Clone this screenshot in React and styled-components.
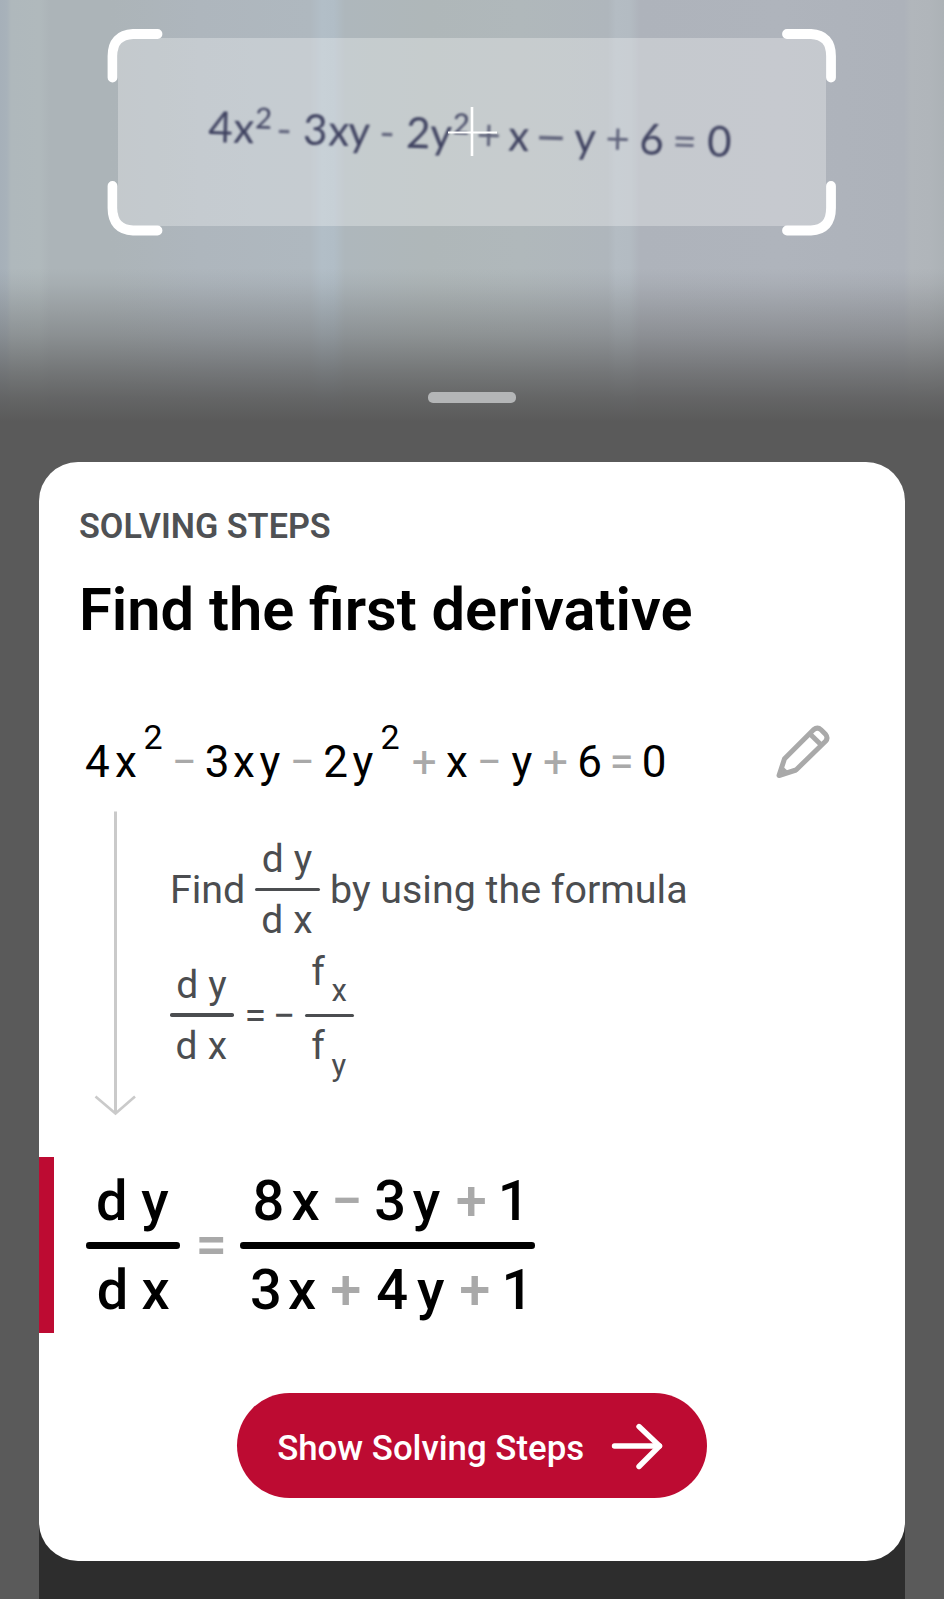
import React from "react";
import styled, { createGlobalStyle } from "styled-components";

const GlobalStyle = createGlobalStyle`
  *, *::before, *::after { box-sizing: border-box; }
  body { margin: 0; background: #5a5a5a; font-family: Roboto, sans-serif; }
`;

const Screen = styled.main`
  display: flex;
  flex-direction: column;
  width: 944px;
  height: 1599px;
  overflow: hidden;
  background: #5a5a5a;
`;

/* ---------- camera preview ---------- */

const Camera = styled.section`
  display: flex;
  flex-direction: column;
  align-items: center;
  flex: none;
  height: 461.5px;
  padding-top: 38px;
  background:
    linear-gradient(
      180deg,
      rgba(90, 90, 90, 0) 268px,
      rgba(90, 90, 90, 0.07) 284px,
      rgba(90, 90, 90, 0.4) 335px,
      rgba(90, 90, 90, 0.7) 373px,
      rgba(90, 90, 90, 0.88) 398px,
      #5a5a5a 422px
    ),
    linear-gradient(
      90deg,
      #a6b0b9 0, #a8b2ba 7px, #afb8bc 11px, #b0b9bc 40px, #acb4b8 50px,
      #acb4b8 110px, #aeb6bd 200px, #afb8bf 310px, #b2bec7 322px,
      #b1bdc6 334px, #aeb7bc 345px, #afb7b9 430px, #b0b8bb 520px,
      #afb6bc 608px, #b4bcc3 616px, #b3bbc2 630px, #aeb3bb 640px,
      #afb4bc 780px, #adb2ba 904px, #b1b6bb 911px, #b0b5ba 930px, #acb2b6 944px
    );
`;

const Viewfinder = styled.div`
  position: relative;
  flex: none;
  width: 708px;
  height: 187.5px;
  padding: 62.7px 0 0 89.6px;
  background: rgba(255, 255, 255, 0.29);
`;

const FrameOverlay = styled.svg`
  position: absolute;
  left: -13px;
  top: -11px;
`;

const PrintedEquation = styled.div`
  font: 42px/50px Lato, "Open Sans", sans-serif;
  color: #3f4260;
  white-space: nowrap;
  transform: rotate(1.65deg);
  transform-origin: 0 41px;
  filter: blur(1.1px);
`;

const Handle = styled.div`
  flex: none;
  width: 88px;
  height: 10.5px;
  margin: 166.5px 1px 0 0;
  border-radius: 5px;
  background: #b4b6b7;
`;

/* ---------- math primitives ---------- */

const Glyph = styled.span`
  display: inline-block;
  width: ${(p) => p.$w}px;
  color: ${(p) => p.$color || "inherit"};
  opacity: ${(p) => p.$fade || 1};
  ${(p) =>
    p.$shift
      ? `font-size: ${p.$size}px; line-height: 0; vertical-align: ${p.$shift}px;`
      : ""}
`;

const Fraction = styled.span`
  display: flex;
  flex-direction: column;
  flex: none;
  width: ${(p) => p.$w}px;
`;

const Part = styled.span`
  white-space: nowrap;
  padding: ${(p) => p.$pad};
`;

const Bar = styled.span`
  height: ${(p) => p.$h}px;
  border-radius: ${(p) => p.$h / 2}px;
  background: currentColor;
`;

/* ---------- card ---------- */

const Sheet = styled.section`
  flex: none;
  width: 866px;
  height: 1137.5px;
  margin-left: 39px;
  background: linear-gradient(180deg, transparent 50%, #2d2d2d 50%);
`;

const Card = styled.article`
  display: flex;
  flex-direction: column;
  height: 1099px;
  padding-top: 44.2px;
  border-radius: 39px;
  background: #fff;
`;

const Eyebrow = styled.p`
  margin: 0 0 29.3px 40px;
  font-size: 34.2px;
  font-weight: 600;
  line-height: 40px;
  color: #4f5154;
`;

const Title = styled.h1`
  margin: 0 0 91.3px 40px;
  font-size: 59.6px;
  font-weight: 600;
  line-height: 70px;
  color: #000;
`;

const EquationRow = styled.div`
  display: flex;
  justify-content: space-between;
  align-items: flex-start;
  height: 52px;
  padding: 0 75.2px 0 46.1px;
`;

const Equation = styled.div`
  font-size: 44px;
  line-height: 52px;
  color: #000;
  white-space: nowrap;
`;

const EditButton = styled.button`
  display: block;
  margin: -11.8px 0 0;
  padding: 0;
  border: 0;
  background: none;
  line-height: 0;
`;

const Step = styled.div`
  display: flex;
  gap: 31.9px;
  margin: 21.7px 0 39px 53px;
  height: 308px;
`;

const Explanation = styled.div`
  padding-top: 26.2px;
  font-size: 39px;
  line-height: 46px;
  color: #4b4d50;
`;

const Line = styled.div`
  display: flex;
  align-items: center;
  margin-bottom: 6.3px;
  white-space: nowrap;
`;

const Word = styled.span`
  font-size: 39.4px;
  width: ${(p) => (p.$w ? p.$w + "px" : "auto")};
  margin-left: ${(p) => p.$ml || 0}px;
  padding-top: 1px;
`;

const Result = styled.div`
  display: flex;
  align-items: center;
  height: 176px;
  padding: 1px 0 0 32px;
  border-left: 15px solid #bd0b32;
  font-size: 56px;
  font-weight: 500;
  line-height: 66px;
  color: #000;
`;

const ResultSign = styled.span`
  width: 44.4px;
  margin-left: 15.4px;
  color: #a9a9a9;
`;

const StepsButton = styled.button`
  display: flex;
  align-items: center;
  gap: 25px;
  width: 470px;
  height: 105px;
  margin: 60px 0 0 198px;
  padding: 0 0 0 40.2px;
  border: 0;
  border-radius: 53px;
  background: #bd0b32;
  color: #fff;
  font: 500 34.8px/42px Roboto, sans-serif;
  white-space: nowrap;
`;

const ButtonLabel = styled.span`
  padding-top: 5px;
`;

const OPERATORS = "+−=";

const printed = [
  ["4", 25], ["x", 21.4], ["2", 21.5, 29, 15], ["-", 26.8], ["3", 25.3], ["x", 20],
  ["y", 30.9], ["-", 26.8], ["2", 24.3], ["y", 22.2], ["2", 24.2, 29, 15], ["+", 31.6],
  ["x", 26.9], ["−", 39.1, 55, -4], ["y", 31.4], ["+", 34], ["6", 33], ["=", 34.7], ["0", 30],
];

const typed = [
  ["4", 30], ["x", 28.5], ["2", 27.9, 34, 28], ["−", 33.2], ["3", 28.4], ["x", 26.5],
  ["y", 29.9], ["−", 33.7], ["2", 29.4], ["y", 28], ["2", 31.1, 34, 28], ["+", 34.4],
  ["x", 30.4], ["−", 35.1], ["y", 31.4], ["+", 34.4], ["6", 32.1], ["=", 32.3], ["0", 30],
];

const numerator = [["8", 39.2], ["x", 39.7], ["−", 43], ["3", 38.4], ["y", 43], ["+", 42], ["1", 32]];
const denominator = [["3", 37.8], ["x", 42.4], ["+", 46.1], ["4", 40.6], ["y", 42.3], ["+", 42.2], ["1", 32]];

function Glyphs({ items, operatorColor, operatorFade }) {
  return items.map(([char, width, size, shift], i) => {
    const isOperator = OPERATORS.includes(char) || char === "-";
    return (
      <Glyph
        key={i}
        $w={width}
        $size={size}
        $shift={shift}
        $color={isOperator ? operatorColor : undefined}
        $fade={isOperator ? operatorFade : undefined}
      >
        {char}
      </Glyph>
    );
  });
}

function Derivative() {
  return (
    <Fraction $w={64.5}>
      <Part $pad="0 0 5.6px 6.3px">
        <Glyphs items={[["d", 32], ["y", 20]]} />
      </Part>
      <Bar $h={3.5} />
      <Part $pad="5.9px 0 0 5.7px">
        <Glyphs items={[["d", 32.2], ["x", 20]]} />
      </Part>
    </Fraction>
  );
}

function ViewfinderFrame() {
  return (
    <FrameOverlay width="734" height="210" viewBox="0 0 734 210" fill="none" stroke="#fff">
      <g strokeWidth="9.8" strokeLinecap="round">
        <path d="M52.5 7H28Q7.5 8 7.5 29V50.5" />
        <path d="M682 7H706Q726 8 726 29V50.5" />
        <path d="M7.5 159V181Q7.5 202.5 28 203.5H52.5" />
        <path d="M726 159V181Q726 202.5 706 203.5H682" />
      </g>
      <path d="M343 105.5H392" strokeWidth="2.2" />
      <path d="M367 80V129" strokeWidth="2.6" />
    </FrameOverlay>
  );
}

function PencilIcon() {
  return (
    <svg width="56" height="56" viewBox="0 0 56 56" fill="none" stroke="#a9a9a9" strokeWidth="5" strokeLinejoin="round">
      <path d="M5 51.5L10.5 34.8L39.5 5.8Q43.5 2.5 47 5.8L51.5 10.3Q54.5 14 51.5 17.2L22 46Z" />
      <path d="M35.5 9.5L47.3 21" />
      <path d="M5 51.5L8 43L14 48.6Z" fill="#a9a9a9" strokeWidth="2" />
    </svg>
  );
}

function DownArrow() {
  return (
    <svg width="46" height="308" viewBox="0 0 46 308" fill="none" stroke="#cacaca">
      <path d="M23.5 1.5V303" strokeWidth="3" />
      <path d="M3.5 286.5L23.5 303.5L43 286.5" strokeWidth="2.6" />
    </svg>
  );
}

function RightArrow() {
  return (
    <svg width="54" height="50" viewBox="0 0 54 50" fill="none" stroke="#fff" strokeWidth="5.4" strokeLinecap="round" strokeLinejoin="round">
      <path d="M5.5 26H50.5" />
      <path d="M30 6.5L50.5 26L30 46.5" />
    </svg>
  );
}

export default function App() {
  return (
    <Screen>
      <GlobalStyle />
      <Camera>
        <Viewfinder>
          <PrintedEquation>
            <Glyphs items={printed} operatorFade={0.75} />
          </PrintedEquation>
          <ViewfinderFrame />
        </Viewfinder>
        <Handle />
      </Camera>

      <Sheet>
        <Card>
          <Eyebrow>SOLVING STEPS</Eyebrow>
          <Title>Find the first derivative</Title>

          <EquationRow>
            <Equation>
              <Glyphs items={typed} operatorColor="#a9a9a9" />
            </Equation>
            <EditButton aria-label="Edit">
              <PencilIcon />
            </EditButton>
          </EquationRow>

          <Step>
            <DownArrow />
            <Explanation>
              <Line>
                <Word $w={85.6}>Find</Word>
                <Derivative />
                <Word $ml={10}>by using the formula</Word>
              </Line>
              <Line>
                <Derivative />
                <Word $ml={10} $w={28.7}>=</Word>
                <Word $w={31.6}>−</Word>
                <Fraction $w={49.5}>
                  <Part $pad="0 0 18.2px 6.7px">
                    <Glyphs items={[["f", 20.2], ["x", 18, 31, -15.5]]} />
                  </Part>
                  <Bar $h={3.5} />
                  <Part $pad="5.9px 0 12.3px 6.7px">
                    <Glyphs items={[["f", 20.2], ["y", 18, 31, -16.5]]} />
                  </Part>
                </Fraction>
              </Line>
            </Explanation>
          </Step>

          <Result>
            <Fraction $w={94}>
              <Part $pad="0 0 8.6px 10px">
                <Glyphs items={[["d", 45.2], ["y", 30]]} />
              </Part>
              <Bar $h={6.5} />
              <Part $pad="8.6px 0 0 10.8px">
                <Glyphs items={[["d", 44.6], ["x", 30]]} />
              </Part>
            </Fraction>
            <ResultSign>=</ResultSign>
            <Fraction $w={295}>
              <Part $pad="0 0 8.6px 12.6px">
                <Glyphs items={numerator} operatorColor="#a9a9a9" />
              </Part>
              <Bar $h={6.5} />
              <Part $pad="8.6px 0 0 10.3px">
                <Glyphs items={denominator} operatorColor="#a9a9a9" />
              </Part>
            </Fraction>
          </Result>

          <StepsButton>
            <ButtonLabel>Show Solving Steps</ButtonLabel>
            <RightArrow />
          </StepsButton>
        </Card>
      </Sheet>
    </Screen>
  );
}
